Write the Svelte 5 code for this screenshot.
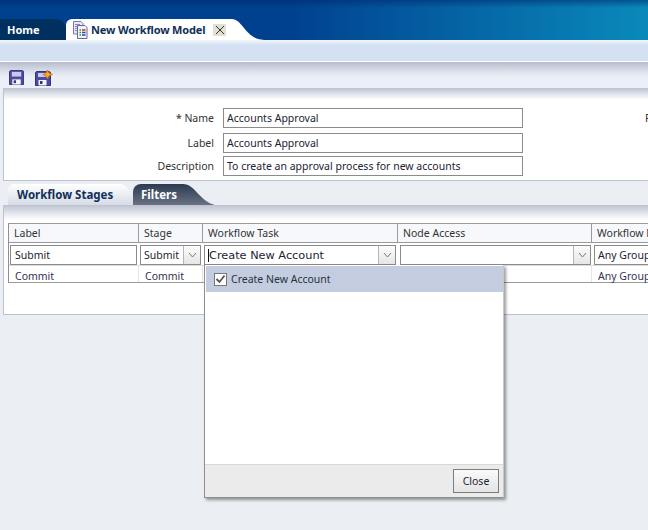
<script>
  const columns = [
    { label: 'Label', width: 130 },
    { label: 'Stage', width: 64 },
    { label: 'Workflow Task', width: 195 },
    { label: 'Node Access', width: 194 },
    { label: 'Workflow M', width: 80 }
  ];
</script>

<div class="page">
  <header class="brand">
    <div class="tab-home">
      <span>Home</span>
      <svg class="wing" width="24" height="21" viewBox="0 0 24 21"><path d="M0 0H4C11 0 14 8 24 21H0Z" fill="#00305f"/></svg>
    </div>
    <div class="tab-active">
      <svg class="doc" width="18" height="18" viewBox="0 0 18 18">
        <path d="M1.5.5H9L11 2.5V13H1.5Z" fill="#e6e6f4" stroke="#7a7ab0"/>
        <path d="M3 3.5H8M3 5.5H9M3 7.5H9M3 9.5H9" stroke="#8a8ac0"/>
        <path d="M5.5 4.5H13L15 6.5V17.5H5.5Z" fill="#f2f2fa" stroke="#66669f"/>
        <path d="M7.5 9H9M7.5 11.5H9M7.5 14H9" stroke="#2a9a3a" stroke-width="1.6"/>
        <path d="M10 9H13.5" stroke="#d03a2a" stroke-width="1.6"/>
        <path d="M10 11.5H13.5M10 14H13.5" stroke="#2a4aa8" stroke-width="1.6"/>
      </svg>
      <span class="tab-title">New Workflow Model</span>
      <span class="tab-close">
        <svg width="10" height="10" viewBox="0 0 10 10"><path d="M1 1L9 9M9 1L1 9" stroke="#333" stroke-width="1"/></svg>
      </span>
      <svg class="wing-active" width="36" height="21" viewBox="0 0 36 21"><path d="M0 0H4C14 0 18 19 33 20.5L36 21H0Z" fill="#fff"/></svg>
    </div>
  </header>

  <div class="band"></div>

  <div class="toolbar">
    <svg width="15" height="15" viewBox="0 0 16 16">
      <path d="M1.5 .5H14.5L15.5 1.5V15.5H.5V1.5Z" fill="#4b4ba0" stroke="#33337a"/>
      <rect x="3" y="2" width="10" height="5" fill="#c8c8ec"/>
      <rect x="3.5" y="10" width="9" height="5.5" fill="#f4f4fa"/>
      <rect x="5" y="11" width="2.5" height="3" fill="#33337a"/>
    </svg>
    <svg width="18" height="16" viewBox="0 0 18 16">
      <path d="M1.5 1.5H14.5L15.5 2.5V15.5H.5V2.5Z" fill="#4b4ba0" stroke="#33337a"/>
      <rect x="3" y="3" width="8" height="4" fill="#c8c8ec"/>
      <rect x="3.5" y="10" width="8" height="5.5" fill="#f4f4fa"/>
      <rect x="5" y="11" width="2.5" height="3" fill="#33337a"/>
      <path d="M12.5 0L14 3L17.5 4.5L14 6L12.5 9L11 6L8 4.5L11 3Z" fill="#f0b020" stroke="#c85a10" stroke-width=".7"/>
    </svg>
  </div>

  <section class="form">
    <div class="row">
      <label for="f-name"><span class="req">*</span> Name</label>
      <input id="f-name" value="Accounts Approval" />
      <span class="cut">F</span>
    </div>
    <div class="row">
      <label for="f-label">Label</label>
      <input id="f-label" value="Accounts Approval" />
    </div>
    <div class="row tight">
      <label for="f-desc">Description</label>
      <input id="f-desc" value="To create an approval process for new accounts" />
    </div>
  </section>

  <nav class="subtabs">
    <div class="sub-active">
      <span>Workflow Stages</span>
      <svg class="sub-wing" width="22" height="21" viewBox="0 0 22 21"><path d="M0 0C8 0 12 14 22 21H0Z" fill="url(#sw)"/><defs><linearGradient id="sw" x1="0" y1="0" x2="0" y2="1"><stop offset="0" stop-color="#fff"/><stop offset="1" stop-color="#d6dbe5"/></linearGradient></defs></svg>
    </div>
    <div class="sub-dark">
      <span>Filters</span>
      <svg class="sub-wing" width="32" height="21" viewBox="0 0 32 21"><path d="M0 0C12 0 16 17 32 21H0Z" fill="url(#dk)"/><defs><linearGradient id="dk" x1="0" y1="0" x2="0" y2="1"><stop offset="0" stop-color="#2c3a50"/><stop offset="1" stop-color="#6a7284"/></linearGradient></defs></svg>
    </div>
  </nav>

  <section class="stages">
    <div class="table">
      <div class="tr head">
        {#each columns as c}
          <div class="th" style="width:{c.width}px">{c.label}</div>
        {/each}
      </div>
      <div class="tr edit">
        <div class="td" style="width:{columns[0].width}px"><div class="field">Submit</div></div>
        <div class="td" style="width:{columns[1].width}px"><div class="combo"><span class="val">Submit</span><span class="arrow"><svg width="9" height="6" viewBox="0 0 9 6"><path d="M1 1L4.5 5L8 1" fill="none" stroke="#777"/></svg></span></div></div>
        <div class="td" style="width:{columns[2].width}px"><div class="combo task"><span class="val"><span class="caret">Create New Account</span></span><span class="arrow"><svg width="9" height="6" viewBox="0 0 9 6"><path d="M1 1L4.5 5L8 1" fill="none" stroke="#777"/></svg></span></div></div>
        <div class="td" style="width:{columns[3].width}px"><div class="combo"><span class="val"></span><span class="arrow"><svg width="9" height="6" viewBox="0 0 9 6"><path d="M1 1L4.5 5L8 1" fill="none" stroke="#777"/></svg></span></div></div>
        <div class="td" style="width:{columns[4].width}px"><div class="combo open"><span class="val">Any Group</span></div></div>
      </div>
      <div class="tr plain">
        <div class="td" style="width:{columns[0].width}px">Commit</div>
        <div class="td" style="width:{columns[1].width}px">Commit</div>
        <div class="td" style="width:{columns[2].width}px"></div>
        <div class="td" style="width:{columns[3].width}px"></div>
        <div class="td" style="width:{columns[4].width}px">Any Group</div>
      </div>
    </div>
  </section>

  <div class="popup">
    <div class="list">
      <div class="option">
        <span class="check"><svg width="11" height="10" viewBox="0 0 11 10"><path d="M1.5 5L4.5 8L9.5 1.5" fill="none" stroke="#555" stroke-width="1.8"/></svg></span>
        <span>Create New Account</span>
      </div>
    </div>
    <div class="foot"><button>Close</button></div>
  </div>
</div>

<style>
  :global(body) {
    margin: 0;
  }
  .page {
    position: relative;
    width: 648px;
    height: 530px;
    overflow: hidden;
    background: #ebeff4;
    font-family: "Noto Sans", "Open Sans", sans-serif;
    font-size: 10.5px;
    color: #1a2433;
  }
  .brand {
    height: 40px;
    box-sizing: border-box;
    padding-top: 19px;
    display: flex;
    align-items: stretch;
    background: linear-gradient(180deg, rgba(0,40,110,.55) 0, rgba(0,40,110,0) 8px),
      linear-gradient(90deg, #00418f 0, #00418f 45%, #0a8abb 100%);
  }
  .tab-home {
    position: relative;
    width: 45px;
    padding-left: 7px;
    background: #00305f;
    color: #fff;
    font-weight: bold;
    font-size: 11px;
    line-height: 21px;
  }
  .wing {
    position: absolute;
    left: 52px;
    top: 0;
  }
  .tab-active {
    position: relative;
    display: flex;
    align-items: center;
    width: 156px;
    margin-left: 14px;
    padding-left: 6px;
    background: #fff;
    border-top-left-radius: 6px;
    gap: 1px;
  }
  .wing-active {
    position: absolute;
    left: 162px;
    top: 0;
  }
  .doc {
    flex: none;
    margin-top: 1px;
  }
  .tab-title {
    font-weight: bold;
    font-size: 11px;
    letter-spacing: -.15px;
    color: #10305a;
    white-space: nowrap;
  }
  .tab-close {
    flex: none;
    display: flex;
    align-items: center;
    justify-content: center;
    width: 13px;
    height: 12px;
    margin-left: 7px;
    background: #e4dfd3;
    border-radius: 1px;
  }
  .band {
    height: 21px;
    background: linear-gradient(180deg, #f4f8fc 0, #d3e1f2 5px, #d3e1f2 100%);
    border-bottom: 1px solid #fff;
  }
  .toolbar {
    height: 26px;
    box-sizing: border-box;
    padding: 8px 0 0 9px;
    display: flex;
    gap: 11px;
    align-items: flex-start;
    background: linear-gradient(180deg, #b6bccc 0, #dde2ec 10px, #ebf0f8 15px);
  }
  .form {
    height: 93px;
    box-sizing: border-box;
    margin-left: 3px;
    padding-top: 20px;
    border-left: 1px solid #bcc3d0;
    border-bottom: 1px solid #bcc3d0;
    background: linear-gradient(180deg, #bcc2cf 0, #e6e9ef 7px, #fff 12px);
  }
  .row {
    display: flex;
    align-items: center;
    height: 20px;
    margin-bottom: 5px;
  }
  .row.tight {
    margin-top: -2px;
  }
  .row label {
    flex: none;
    width: 210px;
    padding-bottom: 1px;
    text-align: right;
    color: #333;
    margin-right: 9px;
  }
  .req {
    color: #555;
    font-weight: bold;
  }
  .row input {
    flex: none;
    width: 300px;
    height: 20px;
    box-sizing: border-box;
    border: 1px solid #8b8b8b;
    padding: 0 3px 1px;
    font: inherit;
    color: #1a2433;
    background: #fff;
    outline: none;
  }
  .cut {
    flex: none;
    margin-left: 122px;
    color: #333;
  }
  .subtabs {
    display: flex;
    height: 21px;
    margin-top: 3px;
    padding-left: 8px;
    font-weight: bold;
    font-size: 11.5px;
    line-height: 22px;
  }
  .sub-active {
    position: relative;
    width: 103px;
    padding-left: 9px;
    border-top-left-radius: 6px;
    background: linear-gradient(180deg, #fff 0, #d6dbe5 100%);
    color: #10305a;
    white-space: nowrap;
  }
  .sub-dark {
    position: relative;
    width: 42px;
    margin-left: 13px;
    padding-left: 8px;
    border-top-left-radius: 8px;
    background: linear-gradient(180deg, #2c3a50 0, #6a7284 100%);
    color: #fff;
  }
  .sub-wing {
    position: absolute;
    top: 0;
    left: 100%;
  }
  .stages {
    height: 110px;
    box-sizing: border-box;
    margin-left: 3px;
    padding: 18px 0 0 5px;
    border-left: 1px solid #bcc3d0;
    border-bottom: 1px solid #bcc3d0;
    background: linear-gradient(180deg, #bcc2cf 0, #e6e9ef 9px, #fff 15px);
  }
  .table {
    width: 700px;
    border-left: 1px solid #8f8f8f;
    margin-left: -1px;
  }
  .tr {
    display: flex;
  }
  .th {
    height: 20px;
    box-sizing: border-box;
    flex: none;
    padding-left: 5px;
    line-height: 18px;
    white-space: nowrap;
    border-top: 1px solid #9a9a9a;
    border-right: 1px solid #9a9a9a;
    border-bottom: 1px solid #9a9a9a;
    background: #f7f8fb;
    color: #333;
  }
  .edit .td {
    height: 23px;
    box-sizing: border-box;
    flex: none;
    padding: 2px 2px 0 1px;
    border-bottom: 1px solid #dcdcdc;
  }
  .edit .td:nth-child(n+4) {
    padding: 2px 1px 0 2px;
  }
  .plain {
    border-bottom: 1px solid #9a9a9a;
  }
  .plain .td {
    height: 16px;
    box-sizing: border-box;
    flex: none;
    padding: 3px 0 0 6px;
    line-height: 15px;
    white-space: nowrap;
    border-right: 1px solid #e6e6e6;
    color: #335;
    background: #fff;
  }
  .field,
  .combo {
    height: 20px;
    box-sizing: border-box;
    border: 1px solid #8b8b8b;
    background: #fff;
    display: flex;
    align-items: center;
    overflow: hidden;
    white-space: nowrap;
  }
  .field {
    padding: 0 0 1px 4px;
  }
  .val {
    flex: 1;
    padding-left: 3px;
  }
  .task .val {
    font-family: "DejaVu Sans", sans-serif;
    font-size: 11.3px;
  }
  .caret {
    border-left: 1px solid #111;
  }
  .arrow {
    flex: none;
    width: 16px;
    height: 18px;
    display: flex;
    align-items: center;
    justify-content: center;
    border-left: 1px solid #b5b5b5;
    background: linear-gradient(180deg, #fcfcfc, #e6e6e6);
  }
  .popup {
    position: absolute;
    left: 204px;
    top: 265px;
    width: 298px;
    height: 232px;
    display: flex;
    flex-direction: column;
    background: #fff;
    border-left: 1px solid #8f8f8f;
    border-right: 1px solid #c8c8c8;
    border-bottom: 1px solid #8f8f8f;
    box-shadow: 2px 2px 3px rgba(0, 0, 0, .4);
  }
  .list {
    flex: 1;
    padding: 1px 0 0 1px;
  }
  .option {
    display: flex;
    align-items: center;
    gap: 4px;
    height: 26px;
    padding-left: 8px;
    background: #c4cde0;
    color: #2a3142;
  }
  .option span:last-child {
    padding-bottom: 1px;
  }
  .check {
    width: 11px;
    height: 11px;
    display: flex;
    align-items: center;
    justify-content: center;
    border: 1px solid #777;
    background: #fff;
  }
  .foot {
    height: 33px;
    box-sizing: border-box;
    display: flex;
    justify-content: flex-end;
    align-items: center;
    padding-right: 4px;
    border-top: 1px solid #d8d8d8;
    background: #ebebeb;
  }
  .foot button {
    width: 46px;
    height: 24px;
    padding: 0 0 1px;
    border: 1px solid #7d7d7d;
    border-radius: 0;
    background: linear-gradient(180deg, #fafafa, #e4e4e4);
    font: inherit;
    color: #1a2433;
  }
</style>
